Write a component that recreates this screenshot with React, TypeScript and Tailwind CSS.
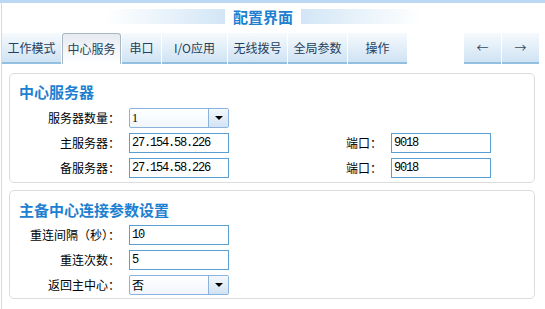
const cjk = { fontFamily: '"Noto Sans CJK SC", "Liberation Sans", sans-serif' };
const mono = { fontFamily: '"Liberation Mono", "Noto Sans CJK SC", monospace' };

const tabs = [
  { label: "工作模式", w: "w-[59px]" },
  { label: "中心服务", w: "w-[59px]", active: true },
  { label: "串口", w: "w-[39px]" },
  { label: "I/O应用", w: "w-[65px]" },
  { label: "无线拨号", w: "w-[59px]" },
  { label: "全局参数", w: "w-[59px]" },
  { label: "操作", w: "w-[59px]" },
];

function Tab({ label, w, active }: { label: string; w: string; active?: boolean }) {
  if (active) {
    return (
      <div className={`${w} h-[31px] flex items-center justify-center rounded-t-[3px] border border-b-0 border-[#a9b7c4] bg-gradient-to-b from-[#e6ebf0] to-white text-[12px] text-[#23405e]`}>
        {label}
      </div>
    );
  }
  return (
    <div className={`${w} h-[31px] flex items-center justify-center border-b-2 border-[#94c0e0] bg-gradient-to-b from-[#f6fafd] to-[#cfe3f3] text-[12px] text-[#23405e]`}>
      {label}
    </div>
  );
}

function TextBox({ value }: { value: string }) {
  return (
    <div className="w-[100px] h-[20px] border border-[#5a9fd2] bg-white flex items-center pl-[2px] text-[12px] text-black tracking-[-1.2px]" style={mono}>
      {value}
    </div>
  );
}

function Select({ value, cjkText }: { value: string; cjkText?: boolean }) {
  return (
    <div className="w-[100px] h-[20px] border border-[#8ab2dc] rounded-[2px] bg-gradient-to-b from-white to-[#f1f6fb] flex items-stretch">
      <div className="flex-1 flex items-center pl-[2px] text-[12px] text-black" style={cjkText ? cjk : { fontFamily: '"Liberation Serif", serif' }}>
        {value}
      </div>
      <div className="w-[20px] border-l border-[#8ab2dc] bg-gradient-to-b from-[#f4f8fc] to-[#d3e3f3] flex items-center justify-center">
        <div className="w-0 h-0 border-l-[4px] border-r-[4px] border-t-[4px] border-l-transparent border-r-transparent border-t-black" />
      </div>
    </div>
  );
}

function Row({ label, children, port }: { label: string; children: React.ReactNode; port?: string }) {
  return (
    <div className="h-[25px] flex items-center">
      <div className="w-[110px] text-right text-[12px] text-black">{label}</div>
      <div className="ml-[9px]">{children}</div>
      {port && (
        <>
          <div className="w-[153px] text-right text-[12px] text-black">端口：</div>
          <div className="ml-[9px]">
            <TextBox value={port} />
          </div>
        </>
      )}
    </div>
  );
}

export default function App() {
  return (
    <div className="w-[545px] h-[309px] bg-white border-t-[3px] border-[#bcd8f4] overflow-hidden" style={cjk}>
      <div className="ml-px h-full border-l-[1px] border-[#c8ddf1]">
        <div className="h-[30px] flex items-center justify-center pb-[3px] pr-[21px]">
          <div className="w-[120px] h-[15px] bg-gradient-to-r from-white to-[#d3e6f6]" />
          <div className="px-[8px] text-[15px] font-bold leading-[15px] text-[#1e80d0]">配置界面</div>
          <div className="w-[120px] h-[15px] bg-gradient-to-r from-[#d3e6f6] to-white" />
        </div>

        <div className="h-[32px] flex items-start gap-px">
          {tabs.map((t) => (
            <Tab key={t.label} {...t} />
          ))}
          <div className="ml-auto flex gap-px mr-[6px]">
            <div className="w-[37px] h-[31px] flex items-center justify-center border-b-2 border-[#94c0e0] bg-gradient-to-b from-[#f6fafd] to-[#cfe3f3] text-[12px] text-[#3a4a5a]">←</div>
            <div className="w-[37px] h-[31px] flex items-center justify-center border-b-2 border-[#94c0e0] bg-gradient-to-b from-[#f6fafd] to-[#cfe3f3] text-[12px] text-[#3a4a5a]">→</div>
          </div>
        </div>

        <div className="pl-[7px] pr-[10px] pt-[8px] flex flex-col gap-[7px]">
          <div className="h-[110px] border border-[#dcdcdc] rounded-[5px] pt-[8px]">
            <div className="h-[20px] pl-[9px] flex items-center text-[15px] font-bold text-[#1e80d0]">中心服务器</div>
            <div className="mt-[3px]">
              <Row label="服务器数量：">
                <Select value="1" />
              </Row>
              <Row label="主服务器：" port="9018">
                <TextBox value="27.154.58.226" />
              </Row>
              <Row label="备服务器：" port="9018">
                <TextBox value="27.154.58.226" />
              </Row>
            </div>
          </div>

          <div className="h-[109px] border border-[#dcdcdc] rounded-[5px] pt-[9px]">
            <div className="h-[20px] pl-[9px] flex items-center text-[15px] font-bold text-[#1e80d0]">主备中心连接参数设置</div>
            <div className="mt-[2px]">
              <Row label="重连间隔（秒）：">
                <TextBox value="10" />
              </Row>
              <Row label="重连次数：">
                <TextBox value="5" />
              </Row>
              <Row label="返回主中心：">
                <Select value="否" cjkText />
              </Row>
            </div>
          </div>
        </div>
      </div>
    </div>
  );
}
